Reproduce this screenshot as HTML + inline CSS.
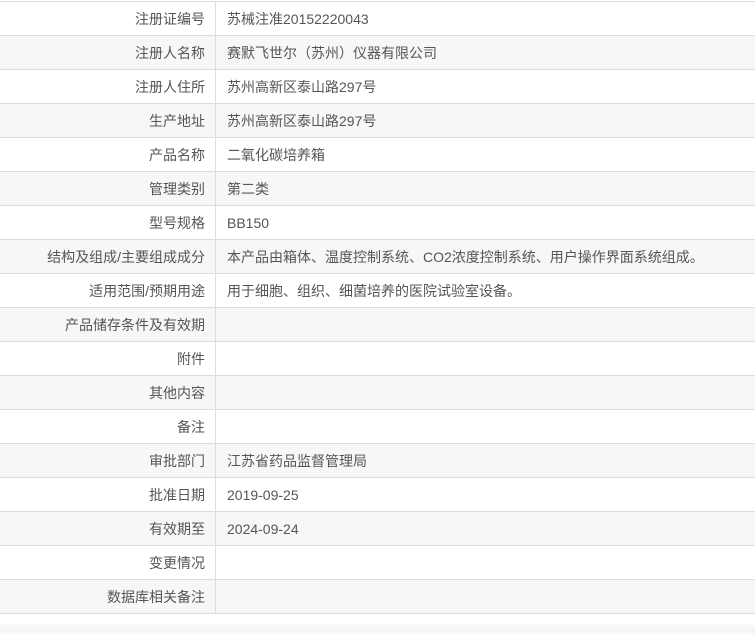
<!DOCTYPE html>
<html><head><meta charset="utf-8"><style>
body{margin:0;background:#fff;width:755px;height:643px;overflow:hidden;font-family:"Liberation Sans","Noto Sans CJK SC",sans-serif;font-size:14px;color:#555;}
table{border-collapse:collapse;width:755px;position:absolute;top:1px;left:0;}
td{height:33px;border-top:1px solid #ddd;border-bottom:1px solid #ddd;padding:0;vertical-align:middle;white-space:nowrap;}
td.l{width:205px;text-align:right;padding-right:10px;border-right:1px solid #ddd;}
td.v{padding-left:11px;}
tr:nth-child(even) td{background:#f7f7f7;}
.sh{position:absolute;top:622px;left:0;width:755px;height:14px;background:linear-gradient(#fff,#f3f3f3 60%,#fff);}
</style></head><body>
<table>
<tr><td class="l">注册证编号</td><td class="v">苏械注准20152220043</td></tr>
<tr><td class="l">注册人名称</td><td class="v">赛默飞世尔（苏州）仪器有限公司</td></tr>
<tr><td class="l">注册人住所</td><td class="v">苏州高新区泰山路297号</td></tr>
<tr><td class="l">生产地址</td><td class="v">苏州高新区泰山路297号</td></tr>
<tr><td class="l">产品名称</td><td class="v">二氧化碳培养箱</td></tr>
<tr><td class="l">管理类别</td><td class="v">第二类</td></tr>
<tr><td class="l">型号规格</td><td class="v">BB150</td></tr>
<tr><td class="l">结构及组成/主要组成成分</td><td class="v">本产品由箱体、温度控制系统、CO2浓度控制系统、用户操作界面系统组成。</td></tr>
<tr><td class="l">适用范围/预期用途</td><td class="v">用于细胞、组织、细菌培养的医院试验室设备。</td></tr>
<tr><td class="l">产品储存条件及有效期</td><td class="v"></td></tr>
<tr><td class="l">附件</td><td class="v"></td></tr>
<tr><td class="l">其他内容</td><td class="v"></td></tr>
<tr><td class="l">备注</td><td class="v"></td></tr>
<tr><td class="l">审批部门</td><td class="v">江苏省药品监督管理局</td></tr>
<tr><td class="l">批准日期</td><td class="v">2019-09-25</td></tr>
<tr><td class="l">有效期至</td><td class="v">2024-09-24</td></tr>
<tr><td class="l">变更情况</td><td class="v"></td></tr>
<tr><td class="l">数据库相关备注</td><td class="v"></td></tr>
</table>
<div class="sh"></div>
</body></html>
